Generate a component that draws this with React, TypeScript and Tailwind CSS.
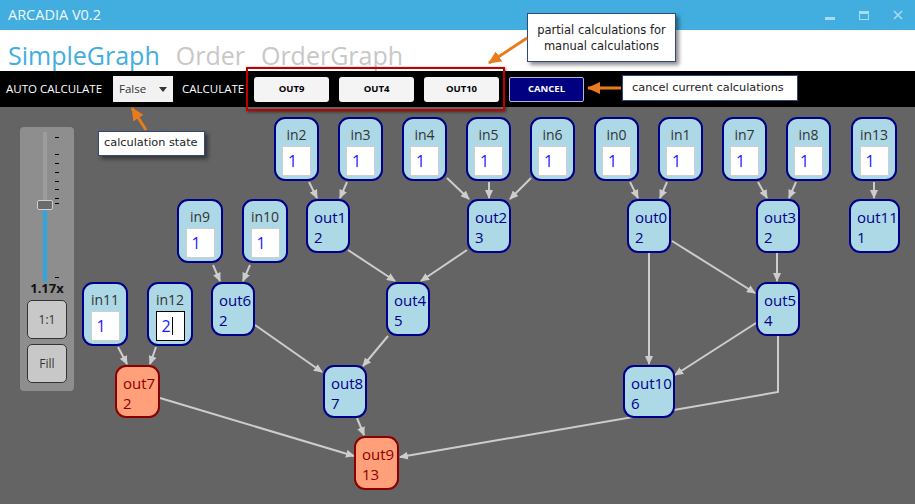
import React from "react";

type InNode = { id: string; x: number; y: number; w: number; v: string; editing?: boolean };
type OutNode = { id: string; x: number; y: number; w: number; h: number; v: string; hot?: boolean };

const inputs: InNode[] = [
  { id: "in2", x: 274, y: 117, w: 45, v: "1" },
  { id: "in3", x: 338, y: 117, w: 45, v: "1" },
  { id: "in4", x: 402, y: 117, w: 45, v: "1" },
  { id: "in5", x: 466, y: 117, w: 45, v: "1" },
  { id: "in6", x: 530, y: 117, w: 45, v: "1" },
  { id: "in0", x: 594, y: 117, w: 45, v: "1" },
  { id: "in1", x: 658, y: 117, w: 45, v: "1" },
  { id: "in7", x: 722, y: 117, w: 45, v: "1" },
  { id: "in8", x: 786, y: 117, w: 45, v: "1" },
  { id: "in13", x: 851, y: 117, w: 46, v: "1" },
  { id: "in9", x: 177, y: 199, w: 46, v: "1" },
  { id: "in10", x: 242, y: 199, w: 46, v: "1" },
  { id: "in11", x: 82, y: 282, w: 46, v: "1" },
  { id: "in12", x: 147, y: 282, w: 46, v: "2", editing: true },
];

const outputs: OutNode[] = [
  { id: "out1", x: 306, y: 199, w: 44, h: 54, v: "2" },
  { id: "out2", x: 467, y: 199, w: 44, h: 54, v: "3" },
  { id: "out0", x: 627, y: 199, w: 44, h: 54, v: "2" },
  { id: "out3", x: 756, y: 199, w: 44, h: 54, v: "2" },
  { id: "out11", x: 849, y: 199, w: 51, h: 54, v: "1" },
  { id: "out6", x: 211, y: 282, w: 44, h: 54, v: "2" },
  { id: "out4", x: 386, y: 282, w: 44, h: 54, v: "5" },
  { id: "out5", x: 756, y: 282, w: 44, h: 54, v: "4" },
  { id: "out7", x: 115, y: 365, w: 45, h: 53, v: "2", hot: true },
  { id: "out8", x: 323, y: 365, w: 44, h: 53, v: "7" },
  { id: "out10", x: 623, y: 365, w: 52, h: 53, v: "6" },
  { id: "out9", x: 354, y: 436, w: 45, h: 54, v: "13", hot: true },
];

// page coordinates, last point gets the arrow head
const edges: string[] = [
  "309,182 317,198",
  "347,182 340,198",
  "447,178 469,199",
  "489,182 489,198",
  "531,178 510,199",
  "630,182 638,198",
  "667,182 660,198",
  "758,182 767,198",
  "796,182 789,198",
  "874,182 874,198",
  "213,265 220,281",
  "250,265 243,281",
  "118,347 127,364",
  "156,347 150,364",
  "348,250 395,281",
  "467,250 421,281",
  "672,241 755,293",
  "649,253 649,364",
  "777,253 777,281",
  "756,323 675,375",
  "255,325 322,372",
  "388,336 363,366",
  "160,398 354,456",
  "357,418 364,435",
  "778,336 778,392 400,457",
];

const font = { fontFamily: '"Open Sans", "Noto Sans", sans-serif' };
const noteFont = { fontFamily: '"DejaVu Sans", sans-serif' };

function InputNode({ n }: { n: InNode }) {
  return (
    <div
      className="absolute rounded-[11px] border-[2.5px] border-[#00008b] bg-[#add8e6] flex flex-col items-center"
      style={{ left: n.x, top: n.y - 107, width: n.w, height: 64 }}
    >
      <div className="text-[14px] leading-none text-[#333] mt-[9px]">{n.id}</div>
      <div
        className={
          "mt-[4px] w-[29px] h-[30px] bg-white flex items-center pl-[5px] text-[16px] text-[#2020ff] " +
          (n.editing ? "border border-black" : "border border-[#cfcfcf]")
        }
      >
        {n.v}
        {n.editing && <span className="w-px h-[18px] bg-black ml-[1px]" />}
      </div>
    </div>
  );
}

function OutputNode({ n }: { n: OutNode }) {
  const c = n.hot
    ? "border-[#8b0000] bg-[#ffa07a] text-[#8b0000]"
    : "border-[#00008b] bg-[#add8e6] text-[#00008b]";
  return (
    <div
      className={"absolute rounded-[11px] border-[2.5px] flex flex-col pl-[6px] pt-[6px] text-[15px] leading-[20px] " + c}
      style={{ left: n.x, top: n.y - 107, width: n.w, height: n.h }}
    >
      <div>{n.id}</div>
      <div>{n.v}</div>
    </div>
  );
}

function Slider() {
  const ticks = [137, 154, 163, 172, 181, 189, 198, 203, 277];
  return (
    <div className="relative w-[54px] h-[264px] rounded-[4px] bg-[#8e8e8e] flex flex-col items-center">
      <div className="absolute left-[23px] top-[5px] w-[4px] h-[78px] bg-[#9c9c9c]" />
      <div className="absolute left-[23px] top-[82px] w-[4px] h-[73px] bg-[#2fa6de]" />
      <div className="absolute left-[17px] top-[73px] w-[16px] h-[10px] rounded-[2px] bg-[#6b6b6b] border border-[#d0d0d0]" />
      {ticks.map((t) => (
        <div key={t} className="absolute left-[35px] w-[4px] h-px bg-black" style={{ top: t - 127 }} />
      ))}
      <div className="mt-[155px] text-[13px] font-bold text-[#111] leading-none">1.17x</div>
      <div className="mt-[5px] w-[40px] h-[39px] rounded-[5px] border border-[#333] bg-[#c8c8c8] flex items-center justify-center text-[12px] text-[#333]">
        1:1
      </div>
      <div className="mt-[5px] w-[40px] h-[39px] rounded-[5px] border border-[#333] bg-[#c8c8c8] flex items-center justify-center text-[12px] text-[#333]">
        Fill
      </div>
    </div>
  );
}

function CalcButton({ label }: { label: string }) {
  return (
    <div className="w-[75px] h-[25px] rounded-[3px] bg-[#f4f4f4] flex items-center justify-center text-[9.5px] font-bold text-black">
      {label}
    </div>
  );
}

export default function App() {
  return (
    <div className="relative w-[915px] h-[504px] overflow-hidden bg-white flex flex-col" style={font}>
      {/* Title bar */}
      <div className="h-[30px] bg-[#42aee0] flex items-center px-[8px] shrink-0">
        <div className="text-[14.5px] text-[#eef8fd]">ARCADIA V0.2</div>
        <div className="ml-auto flex items-center gap-[24px] pr-[4px]">
          <div className="w-[10px] h-[3px] bg-[#a9daf2] mt-[7px]" />
          <div className="w-[10px] h-[9px] border border-[#a9daf2] border-t-[3px]" />
          <svg width="10" height="10" viewBox="0 0 10 10">
            <path d="M1 1 L9 9 M9 1 L1 9" stroke="#a9daf2" strokeWidth="1.6" />
          </svg>
        </div>
      </div>

      {/* Menu */}
      <div className="h-[41px] flex items-end pl-[8px] pb-[3px] gap-[16px] shrink-0 text-[25px] leading-none">
        <span className="text-[#41aee0]">SimpleGraph</span>
        <span className="text-[#c8c8c8]">Order</span>
        <span className="text-[#c8c8c8]">OrderGraph</span>
      </div>

      {/* Toolbar */}
      <div className="h-[36px] bg-black flex items-center shrink-0 text-[11.5px] text-white">
        <span className="ml-[6px] w-[96px] whitespace-nowrap">AUTO CALCULATE</span>
        <div className="ml-[11px] w-[60px] h-[26px] bg-[#f2f2f2] flex items-center px-[6px] text-[#333]">
          False
          <svg className="ml-auto" width="8" height="5" viewBox="0 0 8 5">
            <path d="M0 0 L8 0 L4 5 z" fill="#333" />
          </svg>
        </div>
        <span className="ml-[9px] w-[62px] whitespace-nowrap">CALCULATE</span>
        <div className="ml-[10px] flex gap-[10px]">
          <CalcButton label="OUT9" />
          <CalcButton label="OUT4" />
          <CalcButton label="OUT10" />
        </div>
        <div className="ml-[10px] w-[75px] h-[25px] rounded-[2px] bg-[#000080] border border-[#b8b8c8] flex items-center justify-center text-[9.5px] font-bold text-white">
          CANCEL
        </div>
      </div>

      {/* Canvas */}
      <div className="relative flex-1 bg-[#646464] pl-[20px] pt-[20px]">
        <svg className="absolute inset-0" width="915" height="397" viewBox="0 107 915 397">
          <defs>
            <marker id="ah" markerWidth="9" markerHeight="8" refX="8" refY="4" orient="auto" markerUnits="userSpaceOnUse">
              <path d="M0,0 L9,4 L0,8 z" fill="#cdcdcd" />
            </marker>
          </defs>
          {edges.map((p, i) => (
            <polyline key={i} points={p} fill="none" stroke="#cdcdcd" strokeWidth="2" markerEnd="url(#ah)" />
          ))}
        </svg>
        {inputs.map((n) => (
          <InputNode key={n.id} n={n} />
        ))}
        {outputs.map((n) => (
          <OutputNode key={n.id} n={n} />
        ))}
        <Slider />
      </div>

      {/* Annotations */}
      <div className="absolute left-[246px] top-[67px] w-[259px] h-[44px] border-2 border-[#c00000] shadow-[1px_1px_3px_rgba(0,0,0,0.5)]" />
      <div className="absolute left-[527px] top-[13px] w-[149px] h-[49px] bg-white border border-[#2f4a7a] shadow-[3px_3px_4px_rgba(0,0,0,0.45)] flex flex-col items-center justify-center text-[11.5px] leading-[16px] text-[#222]" style={noteFont}>
        <span>partial calculations for</span>
        <span>manual calculations</span>
      </div>
      <div className="absolute left-[622px] top-[75px] w-[176px] h-[26px] bg-white border border-[#2f4a7a] shadow-[3px_3px_4px_rgba(0,0,0,0.45)] flex items-center pl-[9px] text-[11.3px] text-[#222]" style={noteFont}>
        cancel current calculations
      </div>
      <div className="absolute left-[98px] top-[131px] w-[107px] h-[25px] bg-white border border-[#2f4a7a] shadow-[3px_3px_4px_rgba(0,0,0,0.45)] flex items-center pl-[5px] text-[11.3px] text-[#222]" style={noteFont}>
        calculation state
      </div>
      <svg className="absolute inset-0 pointer-events-none" width="915" height="504">
        <defs>
          <marker id="oa" markerWidth="13" markerHeight="12" refX="12" refY="6" orient="auto" markerUnits="userSpaceOnUse">
            <path d="M0,0 L13,6 L0,12 z" fill="#e87b1c" />
          </marker>
        </defs>
        <line x1="527" y1="38" x2="489" y2="63" stroke="#e87b1c" strokeWidth="3" markerEnd="url(#oa)" />
        <line x1="621" y1="88" x2="588" y2="88" stroke="#e87b1c" strokeWidth="3" markerEnd="url(#oa)" />
        <line x1="146" y1="130" x2="132" y2="108" stroke="#e87b1c" strokeWidth="3" markerEnd="url(#oa)" />
      </svg>
    </div>
  );
}
